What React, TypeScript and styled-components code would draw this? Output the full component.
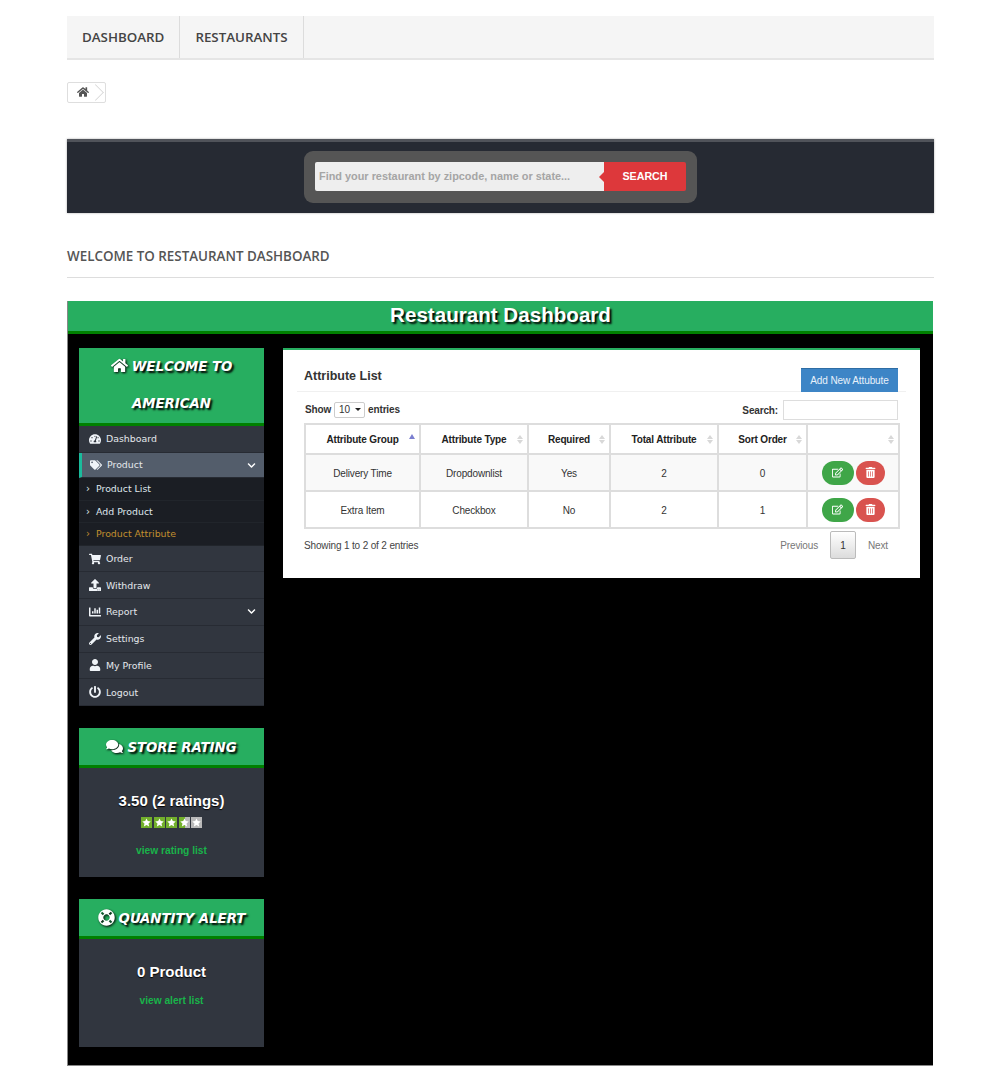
import React from "react";
import styled, { createGlobalStyle } from "styled-components";
import {
  FaHome, FaTachometerAlt, FaTags, FaChevronDown, FaShoppingCart, FaUpload, FaChartBar,
  FaWrench, FaUser, FaPowerOff, FaComments, FaLifeRing, FaRegEdit, FaTrashAlt,
} from "react-icons/fa";

const Global = createGlobalStyle`
  html, body { margin: 0; padding: 0; background: #fff; }
  body { font-family: "Liberation Sans", Arial, sans-serif; }
  * { box-sizing: border-box; }
`;

const Page = styled.div`
  width: 867px;
  margin: 0 0 0 67px;
  padding: 16px 0 24px;
`;

const TopNav = styled.nav`
  display: flex;
  height: 44px;
  background: #f5f5f5;
  border-bottom: 2px solid #e5e5e5;
`;

const NavItem = styled.a`
  display: flex;
  align-items: center;
  padding: 0 15px;
  border-right: 1px solid #dcdcdc;
  font: 600 13.35px "Open Sans", sans-serif;
  color: #444;
`;

const CrumbBar = styled.div`
  display: flex;
  margin-top: 22px;
  height: 21px;
`;

const Crumb = styled.div`
  position: relative;
  display: flex;
  align-items: center;
  width: 39px;
  height: 21px;
  padding: 0 0 2px 9px;
  border: 1px solid #dedede;
  border-radius: 2px;
  color: #555;
  font-size: 12px;
  overflow: hidden;
  &::after {
    content: "";
    position: absolute;
    right: 1px;
    top: 2px;
    width: 14px;
    height: 14px;
    border-top: 1px solid #d4d4d4;
    border-right: 1px solid #d4d4d4;
    transform: translateX(-1px) rotate(45deg) scale(.78);
  }
`;

const SearchBand = styled.div`
  display: flex;
  justify-content: center;
  margin-top: 36px;
  height: 74px;
  padding: 9px 0 10px;
  background: #262a33;
  border-top: 3px solid #50535a;
  box-shadow: 0 0 2px rgba(0,0,0,.35);
`;

const SearchPill = styled.div`
  display: flex;
  width: 393px;
  height: 52px;
  padding: 11px 11px 12px;
  background: #555;
  border-radius: 9px;
`;

const SearchInput = styled.div`
  flex: 1;
  display: flex;
  align-items: center;
  padding: 0 0 1px 4px;
  background: #eee;
  border-radius: 2px 0 0 2px;
  white-space: nowrap;
  font: bold 10.9px "Liberation Sans", sans-serif;
  color: #a5a5a5;
`;

const SearchButton = styled.div`
  position: relative;
  width: 82px;
  display: flex;
  align-items: center;
  justify-content: center;
  padding-bottom: 1px;
  background: #dd383b;
  border-radius: 0 2px 2px 0;
  color: #fff;
  font: bold 10.7px "Liberation Sans", sans-serif;
  &::before {
    content: "";
    position: absolute;
    left: -5px;
    top: 10px;
    border: 5px solid transparent;
    border-left: 0;
    border-right-color: #dd383b;
  }
`;

const WelcomeHeading = styled.h2`
  margin: 0;
  padding: 34px 0 12px;
  height: 65px;
  border-bottom: 1px solid #ddd;
  font: 600 13.4px/18px "Open Sans", sans-serif;
  color: #555;
`;

const Panel = styled.section`
  margin: 23px 1px 0 0;
  height: 765px;
  background: #000;
  border-left: 1px solid #888;
  border-bottom: 1px solid #888;
`;

const PanelTitle = styled.h1`
  margin: 0;
  height: 33px;
  background: #27ae60;
  border-bottom: 3px solid #008000;
  text-align: center;
  font: bold 20.6px/28px "Liberation Sans", sans-serif;
  color: #fff;
  text-shadow: 2px 2px 2px #000;
`;

const Columns = styled.div`
  display: flex;
  align-items: flex-start;
  padding: 14px 13px 0 11px;
  gap: 19px;
`;

const Sidebar = styled.aside`
  width: 185px;
  display: flex;
  flex-direction: column;
  gap: 22px;
`;

const Banner = styled.div<{ $tall?: boolean }>`
  background: #27ae60;
  border-bottom: 3px solid #008000;
  height: ${(p) => (p.$tall ? "78px" : "40px")};
  text-align: center;
  font: italic bold 13.3px/${(p) => (p.$tall ? "37px" : "39px")} "DejaVu Sans", Verdana, sans-serif;
  color: #fff;
  text-shadow: 2px 2px 2px #000;
  white-space: nowrap;
  svg { vertical-align: -3px; font-size: 17px; margin-right: 4px; filter: drop-shadow(1px 1px 1px #000); }
`;

const Menu = styled.ul`
  margin: 0;
  padding: 0;
  list-style: none;
  background: #31363f;
`;

const MenuItem = styled.li<{ $active?: boolean }>`
  position: relative;
  display: flex;
  align-items: center;
  height: ${(p) => (p.$active ? "25.3px" : "26.7px")};
  padding-left: ${(p) => (p.$active ? "7px" : "9px")};
  background: ${(p) => (p.$active ? "#535d6b" : "#31363f")};
  border-left: ${(p) => (p.$active ? "3px solid #1abb9c" : "0")};
  border-bottom: 1px solid #272b33;
  font: 9.4px "DejaVu Sans", Verdana, sans-serif;
  color: #e4e8ec;
`;

const MenuIcon = styled.span`
  display: inline-flex;
  justify-content: center;
  width: 14px;
  margin-right: 4px;
  font-size: 12px;
  color: #f0f4f8;
`;

const Chevron = styled.span`
  position: absolute;
  right: 8px;
  top: 8px;
  font-size: 9px;
  color: #fff;
  display: inline-flex;
`;

const SubMenu = styled.ul`
  margin: 0;
  padding: 0;
  list-style: none;
  background: #1b1e24;
`;

const SubItem = styled.li<{ $current?: boolean }>`
  display: flex;
  align-items: center;
  height: 22.6px;
  padding-left: 7px;
  border-bottom: 1px solid #21252b;
  font: 9.4px "DejaVu Sans", Verdana, sans-serif;
  color: ${(p) => (p.$current ? "#c18f2f" : "#dfe6ec")};
  &::before {
    content: "›";
    width: 10px;
    font-size: 10px;
  }
`;

const WidgetBody = styled.div<{ $h: number }>`
  height: ${(p) => p.$h}px;
  background: #31363f;
  text-align: center;
  padding-top: 23px;
`;

const WidgetValue = styled.div`
  font: bold 15px/20px "Liberation Sans", sans-serif;
  color: #fff;
  text-shadow: 0 1px 1px #000;
`;

const Stars = styled.div`
  display: flex;
  justify-content: center;
  gap: 1.5px;
  margin-top: 6px;
`;

const StarBox = styled.span<{ $fill: number }>`
  display: flex;
  align-items: center;
  justify-content: center;
  width: 11px;
  height: 11px;
  background: linear-gradient(90deg, #73b02c ${(p) => p.$fill}%, #b9b9b9 ${(p) => p.$fill}%);
`;

const WidgetLink = styled.a<{ $top: number }>`
  display: block;
  margin-top: ${(p) => p.$top}px;
  font: bold 10.2px/14px "Liberation Sans", sans-serif;
  color: #19b34a;
`;

const Card = styled.main`
  width: 637px;
  height: 230px;
  background: #fff;
  border-top: 2px solid #27ae60;
  padding: 0 21px;
`;

const CardHead = styled.div`
  display: flex;
  justify-content: space-between;
  height: 42px;
  padding: 18px 8px 0 7px;
  margin: 0 -7px;
  border-bottom: 1px solid #f0f0f0;
`;

const CardTitle = styled.h3`
  margin: 0;
  padding-top: 1px;
  font: bold 12.5px/14px "Liberation Sans", sans-serif;
  color: #333;
`;

const AddButton = styled.button`
  width: 97px;
  height: 24px;
  padding: 0;
  border: 0;
  border-top: 1px solid #2e6da4;
  background: #3d85c6;
  color: #e8f1fa;
  font: 10px "Liberation Sans", sans-serif;
  letter-spacing: -.1px;
`;

const Controls = styled.div`
  display: flex;
  justify-content: space-between;
  align-items: center;
  height: 31px;
  padding-top: 4px;
  font: bold 10px "Liberation Sans", sans-serif;
  letter-spacing: -.15px;
  color: #333;
`;

const ShowBox = styled.div`
  display: flex;
  align-items: center;
  gap: 3px;
  padding-left: 1px;
`;

const SelectBox = styled.span`
  display: inline-flex;
  justify-content: space-between;
  align-items: center;
  width: 31px;
  height: 16px;
  padding: 0 3px 0 4px;
  border: 1px solid #ccc;
  border-radius: 2px;
  font-weight: normal;
  &::after {
    content: "";
    border: 3.5px solid transparent;
    border-bottom: 0;
    border-top-color: #222;
  }
`;

const SearchBox = styled.label`
  display: flex;
  align-items: center;
  gap: 5px;
  margin-right: 1px;
`;

const SearchLabel = styled.span`
  margin-top: 2px;
`;

const SearchField = styled.span`
  width: 115px;
  height: 20px;
  border: 1px solid #ddd;
`;

const Table = styled.table`
  width: 594px;
  table-layout: fixed;
  border-collapse: collapse;
  border: 2px solid #ddd;
  font: 10px "Liberation Sans", sans-serif;
  letter-spacing: -.15px;
  color: #333;
`;

const Head = styled.th`
  position: relative;
  height: 30px;
  padding: 0;
  border: 2px solid #ddd;
  font-weight: bold;
  text-align: center;
  color: #222;
`;

const SortUp = styled.i<{ $on?: boolean }>`
  position: absolute;
  right: 4px;
  top: ${(p) => (p.$on ? "9px" : "10px")};
  border-left: 3.5px solid transparent;
  border-right: 3.5px solid transparent;
  border-bottom: ${(p) => (p.$on ? "5px solid #7b7fd0" : "4px solid #d8d8d8")};
`;

const SortDown = styled.i`
  position: absolute;
  right: 4px;
  top: 15px;
  border-left: 3.5px solid transparent;
  border-right: 3.5px solid transparent;
  border-top: 4px solid #d8d8d8;
`;

const Cell = styled.td`
  height: 37px;
  padding: 1px 0 0;
  border: 2px solid #ddd;
  text-align: center;
`;

const Row = styled.tr<{ $odd?: boolean }>`
  background: ${(p) => (p.$odd ? "#f9f9f9" : "#fff")};
`;

const Actions = styled.div`
  display: flex;
  justify-content: center;
  gap: 2px;
  margin-top: -1px;
`;

const RoundBtn = styled.span<{ $green?: boolean }>`
  display: flex;
  align-items: center;
  justify-content: center;
  width: ${(p) => (p.$green ? "32px" : "29px")};
  height: 24px;
  border-radius: 12px;
  background: ${(p) => (p.$green ? "#3fa648" : "#d9534f")};
  color: #fff;
  font-size: 11px;
`;

const Footer = styled.div`
  display: flex;
  justify-content: space-between;
  align-items: flex-start;
  padding-top: 2px;
  font: 10px "Liberation Sans", sans-serif;
  letter-spacing: -.15px;
  color: #444;
`;

const Info = styled.span`
  margin-top: 9px;
`;

const Pager = styled.div`
  display: flex;
  align-items: center;
  color: #777;
  margin-right: 11px;
`;

const PageNum = styled.span`
  display: flex;
  align-items: center;
  justify-content: center;
  width: 26px;
  height: 28px;
  margin: 0 12px;
  border: 1px solid #bbb;
  border-radius: 2px;
  background: linear-gradient(#fff, #dcdcdc);
  color: #333;
`;

const Star = () => (
  <svg width="9" height="9" viewBox="0 0 24 24" fill="#fff">
    <path d="M12 1l3.4 7.3 7.9.9-5.9 5.4 1.6 7.9L12 18.6 5 22.5l1.6-7.9L.7 9.2l7.9-.9z" />
  </svg>
);

const columns = ["Attribute Group", "Attribute Type", "Required", "Total Attribute", "Sort Order", ""];
const widths = [115, 108, 82, 108, 89, 92];
const rows = [
  ["Delivery Time", "Dropdownlist", "Yes", "2", "0"],
  ["Extra Item", "Checkbox", "No", "2", "1"],
];

export default function App() {
  return (
    <>
      <Global />
      <Page>
        <TopNav>
          <NavItem>DASHBOARD</NavItem>
          <NavItem>RESTAURANTS</NavItem>
        </TopNav>
        <CrumbBar>
          <Crumb><FaHome /></Crumb>
        </CrumbBar>
        <SearchBand>
          <SearchPill>
            <SearchInput>Find your restaurant by zipcode, name or state...</SearchInput>
            <SearchButton>SEARCH</SearchButton>
          </SearchPill>
        </SearchBand>
        <WelcomeHeading>WELCOME TO RESTAURANT DASHBOARD</WelcomeHeading>
        <Panel>
          <PanelTitle>Restaurant Dashboard</PanelTitle>
          <Columns>
            <Sidebar>
              <div>
                <Banner $tall><FaHome />WELCOME TO<br />AMERICAN</Banner>
                <Menu>
                  <MenuItem><MenuIcon><FaTachometerAlt /></MenuIcon>Dashboard</MenuItem>
                  <MenuItem $active><MenuIcon><FaTags /></MenuIcon>Product<Chevron><FaChevronDown /></Chevron></MenuItem>
                  <SubMenu>
                    <SubItem>Product List</SubItem>
                    <SubItem>Add Product</SubItem>
                    <SubItem $current>Product Attribute</SubItem>
                  </SubMenu>
                  <MenuItem><MenuIcon><FaShoppingCart /></MenuIcon>Order</MenuItem>
                  <MenuItem><MenuIcon><FaUpload /></MenuIcon>Withdraw</MenuItem>
                  <MenuItem><MenuIcon><FaChartBar /></MenuIcon>Report<Chevron><FaChevronDown /></Chevron></MenuItem>
                  <MenuItem><MenuIcon><FaWrench /></MenuIcon>Settings</MenuItem>
                  <MenuItem><MenuIcon><FaUser /></MenuIcon>My Profile</MenuItem>
                  <MenuItem><MenuIcon><FaPowerOff /></MenuIcon>Logout</MenuItem>
                </Menu>
              </div>
              <div>
                <Banner><FaComments />STORE RATING</Banner>
                <WidgetBody $h={109}>
                  <WidgetValue>3.50 (2 ratings)</WidgetValue>
                  <Stars>
                    <StarBox $fill={100}><Star /></StarBox>
                    <StarBox $fill={100}><Star /></StarBox>
                    <StarBox $fill={100}><Star /></StarBox>
                    <StarBox $fill={50}><Star /></StarBox>
                    <StarBox $fill={0}><Star /></StarBox>
                  </Stars>
                  <WidgetLink $top={16}>view rating list</WidgetLink>
                </WidgetBody>
              </div>
              <div>
                <Banner><FaLifeRing />QUANTITY ALERT</Banner>
                <WidgetBody $h={108}>
                  <WidgetValue>0 Product</WidgetValue>
                  <WidgetLink $top={12}>view alert list</WidgetLink>
                </WidgetBody>
              </div>
            </Sidebar>
            <Card>
              <CardHead>
                <CardTitle>Attribute List</CardTitle>
                <AddButton>Add New Attubute</AddButton>
              </CardHead>
              <Controls>
                <ShowBox>Show <SelectBox>10</SelectBox> entries</ShowBox>
                <SearchBox><SearchLabel>Search:</SearchLabel><SearchField /></SearchBox>
              </Controls>
              <Table>
                <colgroup>
                  {widths.map((w, i) => <col key={i} style={{ width: w }} />)}
                </colgroup>
                <thead>
                  <tr>
                    {columns.map((c, i) => (
                      <Head key={i}>
                        {c}
                        {i === 0 ? <SortUp $on /> : <><SortUp /><SortDown /></>}
                      </Head>
                    ))}
                  </tr>
                </thead>
                <tbody>
                  {rows.map((r, i) => (
                    <Row key={i} $odd={i === 0}>
                      {r.map((v, j) => <Cell key={j}>{v}</Cell>)}
                      <Cell>
                        <Actions>
                          <RoundBtn $green><FaRegEdit /></RoundBtn>
                          <RoundBtn><FaTrashAlt /></RoundBtn>
                        </Actions>
                      </Cell>
                    </Row>
                  ))}
                </tbody>
              </Table>
              <Footer>
                <Info>Showing 1 to 2 of 2 entries</Info>
                <Pager>Previous<PageNum>1</PageNum>Next</Pager>
              </Footer>
            </Card>
          </Columns>
        </Panel>
      </Page>
    </>
  );
}
